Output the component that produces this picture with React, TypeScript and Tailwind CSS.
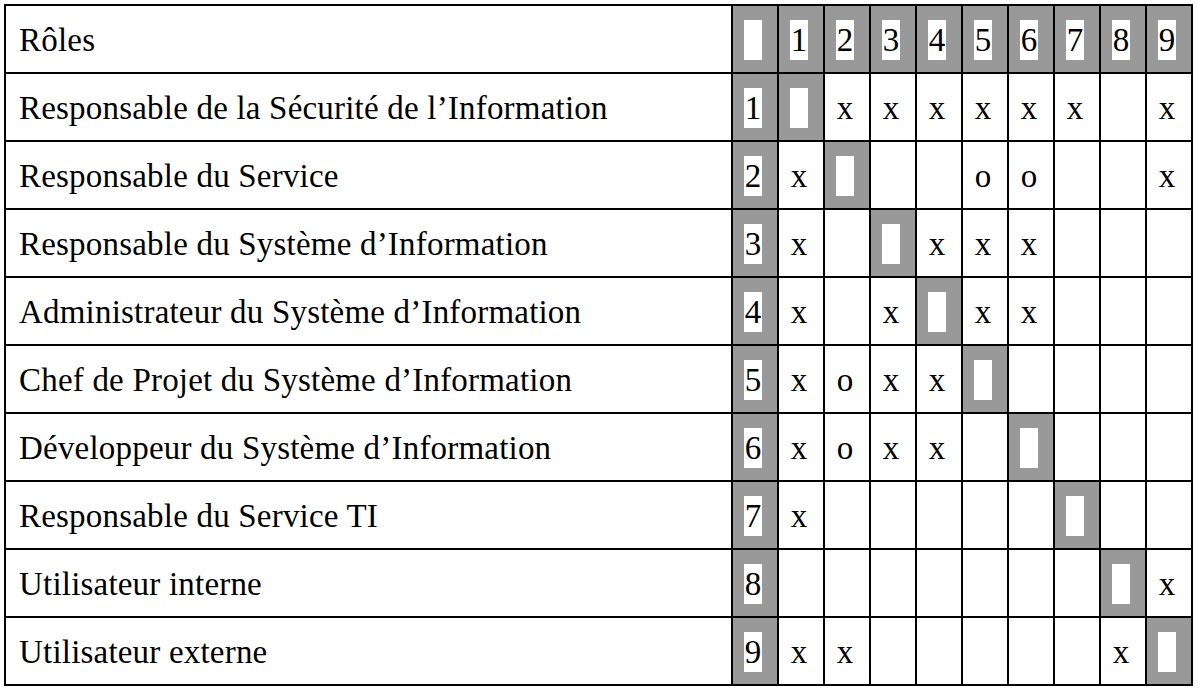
import React from "react";

const roles = [
  { label: "Responsable de la Sécurité de l’Information", cells: ["", "x", "x", "x", "x", "x", "x", "", "x"] },
  { label: "Responsable du Service", cells: ["x", "", "", "", "o", "o", "", "", "x"] },
  { label: "Responsable du Système d’Information", cells: ["x", "", "", "x", "x", "x", "", "", ""] },
  { label: "Administrateur du Système d’Information", cells: ["x", "", "x", "", "x", "x", "", "", ""] },
  { label: "Chef de Projet du Système d’Information", cells: ["x", "o", "x", "x", "", "", "", "", ""] },
  { label: "Développeur du Système d’Information", cells: ["x", "o", "x", "x", "", "", "", "", ""] },
  { label: "Responsable du Service TI", cells: ["x", "", "", "", "", "", "", "", ""] },
  { label: "Utilisateur interne", cells: ["", "", "", "", "", "", "", "", "x"] },
  { label: "Utilisateur externe", cells: ["x", "x", "", "", "", "", "", "x", ""] },
];

const Highlight = ({ children }: { children?: React.ReactNode }) => (
  <span className="flex h-[40px] w-[18px] items-center justify-center bg-white">{children}</span>
);

const GrayCell = ({ children }: { children?: React.ReactNode }) => (
  <div className="flex items-center bg-[#999999] pl-[11px] pt-[2px]">
    <Highlight>{children}</Highlight>
  </div>
);

const Cell = ({ value }: { value: string }) => (
  <div className="flex items-center bg-white pl-[11px] pt-[2px]">
    <span className="flex w-[18px] justify-center">{value}</span>
  </div>
);

const Label = ({ children }: { children: React.ReactNode }) => (
  <div className="flex items-center bg-white pl-[13px] pt-[2px] tracking-[0.2px]">{children}</div>
);

export default function App() {
  return (
    <div className="min-h-screen bg-white pl-[4px] pt-[4px] font-['Liberation_Serif',serif] text-[33px] leading-none text-black">
      <div className="inline-grid grid-cols-[725px_repeat(10,44px)] auto-rows-[66px] gap-[2px] border-2 border-black bg-black">
        <Label>Rôles</Label>
        <GrayCell />
        {[1, 2, 3, 4, 5, 6, 7, 8, 9].map((n) => (
          <GrayCell key={n}>{n}</GrayCell>
        ))}

        {roles.map((role, i) => (
          <React.Fragment key={role.label}>
            <Label>{role.label}</Label>
            <GrayCell>{i + 1}</GrayCell>
            {Array.from({ length: 9 }).map((_, j) =>
              j === i ? <GrayCell key={j} /> : <Cell key={j} value={role.cells[j]} />
            )}
          </React.Fragment>
        ))}
      </div>
    </div>
  );
}
